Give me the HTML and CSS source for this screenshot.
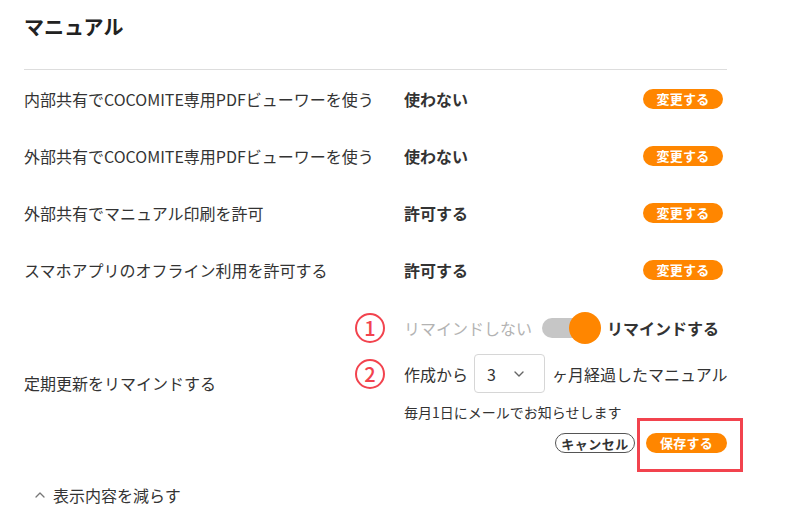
FILE: index.html
```html
<!DOCTYPE html>
<html lang="ja">
<head>
<meta charset="utf-8">
<title>マニュアル</title>
<link rel="stylesheet" href="styles.css">
</head>
<body>
<div class="page">
  <h1 class="title">マニュアル</h1>

  <div class="row">
    <div class="label">内部共有でCOCOMITE専用PDFビューワーを使う</div>
    <div class="value">使わない</div>
    <button class="btn-change">変更する</button>
  </div>
  <div class="row">
    <div class="label">外部共有でCOCOMITE専用PDFビューワーを使う</div>
    <div class="value">使わない</div>
    <button class="btn-change">変更する</button>
  </div>
  <div class="row">
    <div class="label">外部共有でマニュアル印刷を許可</div>
    <div class="value">許可する</div>
    <button class="btn-change">変更する</button>
  </div>
  <div class="row">
    <div class="label">スマホアプリのオフライン利用を許可する</div>
    <div class="value">許可する</div>
    <button class="btn-change">変更する</button>
  </div>

  <div class="remind-row">
    <div class="label remind-label">定期更新をリマインドする</div>
    <div class="remind-body">
      <div class="line line-toggle">
        <span class="num">1</span>
        <span class="off-text">リマインドしない</span>
        <span class="toggle"><span class="track"></span><span class="knob"></span></span>
        <span class="on-text">リマインドする</span>
      </div>
      <div class="line line-select">
        <span class="num">2</span>
        <span>作成から</span>
        <span class="select">
          <span class="select-value">3</span>
          <svg class="select-chevron" width="10" height="6" viewBox="0 0 10 6"><polyline points="1,1 5,5 9,1" fill="none" stroke="#666" stroke-width="1.4" stroke-linecap="round" stroke-linejoin="round"/></svg>
        </span>
        <span>ヶ月経過したマニュアル</span>
      </div>
      <div class="note">毎月1日にメールでお知らせします</div>
      <div class="actions">
        <button class="btn-cancel">キャンセル</button>
        <button class="btn-save">保存する</button>
      </div>
    </div>
  </div>

  <div class="collapse">
    <svg class="collapse-chevron" width="10" height="6" viewBox="0 0 10 6"><polyline points="1,5 5,1 9,5" fill="none" stroke="#777" stroke-width="1.3" stroke-linecap="round" stroke-linejoin="round"/></svg>
    <span>表示内容を減らす</span>
  </div>
</div>
</body>
</html>
```

FILE: styles.css
```css
html, body {
  margin: 0;
  padding: 0;
  background: #ffffff;
}

body {
  font-family: "Noto Sans CJK JP", "Noto Sans", sans-serif;
  color: #333333;
  font-size: 16px;
}

.page {
  margin-left: 24px;
  width: 703px;
}

.title {
  margin: 0;
  padding-top: 13px;
  padding-bottom: 28px;
  font-size: 20px;
  line-height: 28px;
  font-weight: 700;
  color: #222222;
  border-bottom: 1px solid #dddddd;
}

.row {
  display: grid;
  grid-template-columns: 380px 1fr 80px;
  align-items: center;
  height: 57px;
  padding-right: 4px;
}

.label {
  font-size: 16px;
  line-height: 24px;
  color: #333333;
  padding-top: 1px;
}

.value {
  font-size: 16px;
  line-height: 24px;
  font-weight: 700;
  color: #333333;
  padding-top: 1px;
}

button {
  font-family: inherit;
  margin: 0;
  cursor: pointer;
}

.btn-change,
.btn-save {
  height: 20px;
  width: 80px;
  padding: 0;
  border: none;
  border-radius: 10px;
  background: #ff8600;
  color: #ffffff;
  font-size: 13px;
  font-weight: 700;
  line-height: 20px;
  letter-spacing: 0.3px;
}

.btn-save {
  width: 81px;
  position: relative;
}

.btn-save::after {
  content: "";
  position: absolute;
  left: -9px;
  right: -16px;
  top: -15px;
  bottom: -19px;
  border: 3px solid #f2434e;
}

.btn-cancel {
  height: 20px;
  width: 80px;
  padding: 0;
  border: 1.5px solid #555555;
  border-radius: 10px;
  background: #ffffff;
  color: #333333;
  font-size: 13px;
  font-weight: 700;
  line-height: 17px;
  letter-spacing: 0.5px;
}

.remind-row {
  display: grid;
  grid-template-columns: 380px 1fr;
  align-items: center;
}

.remind-label {
  padding-top: 0;
  margin-top: -3px;
}

.remind-body {
  padding-top: 14px;
  padding-bottom: 17px;
  min-width: 0;
}

.line {
  position: relative;
  display: flex;
  align-items: center;
  font-size: 16px;
  white-space: nowrap;
}

.line > span {
  flex-shrink: 0;
}

.num {
  position: absolute;
  left: -49px;
  top: 50%;
  margin-top: -15px;
  width: 30px;
  height: 30px;
  box-sizing: border-box;
  border: 2px solid #f2434e;
  border-radius: 50%;
  color: #f2434e;
  font-size: 20px;
  font-weight: 500;
  line-height: 25px;
  text-align: center;
}

.line-toggle {
  height: 32px;
}

.off-text {
  color: #b3b3b3;
  margin-right: 10px;
}

.toggle {
  position: relative;
  width: 60px;
  height: 32px;
  margin-right: 5px;
}

.track {
  position: absolute;
  left: 0;
  top: 6px;
  width: 52px;
  height: 20px;
  border-radius: 10px;
  background: #c6c6c6;
}

.knob {
  position: absolute;
  left: 27px;
  top: 0;
  width: 32px;
  height: 32px;
  border-radius: 50%;
  background: #ff8600;
}

.on-text {
  font-weight: 700;
  color: #333333;
}

.line-select {
  margin-top: 10px;
  height: 39px;
}

.select {
  display: flex;
  align-items: center;
  box-sizing: border-box;
  width: 71px;
  height: 39px;
  margin: 0 7px 0 6px;
  padding-left: 12px;
  border: 1px solid #d6d6d6;
  border-radius: 4px;
}

.select-value {
  width: 27px;
  font-size: 16px;
}

.select-chevron {
  display: block;
}

.note {
  margin-top: 9px;
  font-size: 14px;
  line-height: 20px;
  color: #333333;
}

.actions {
  margin-top: 11px;
  display: flex;
  justify-content: flex-end;
  gap: 11px;
}

.collapse {
  margin-top: 13px;
  display: flex;
  align-items: center;
  gap: 8px;
  padding-left: 11px;
  font-size: 16px;
  line-height: 24px;
  color: #333333;
}

.collapse-chevron {
  display: block;
}
```
